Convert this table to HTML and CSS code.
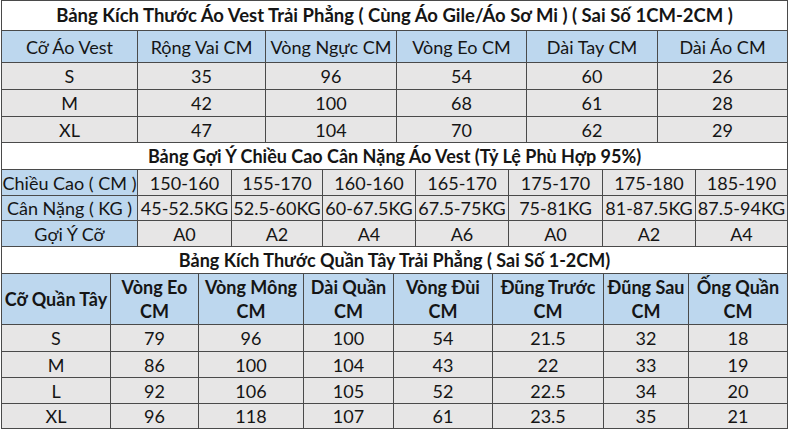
FILE: index.html
```html
<!DOCTYPE html>
<html lang="vi">
<head>
<meta charset="utf-8">
<title>Bảng Kích Thước</title>
<link rel="stylesheet" href="styles.css">
</head>
<body>
<div class="sheet">
  <section class="grid g1">
    <div class="c title t1">Bảng Kích Thước Áo Vest Trải Phẳng ( Cùng Áo Gile/Áo Sơ Mi ) ( Sai Số 1CM-2CM )</div>
    <div class="c hd">Cỡ Áo Vest</div><div class="c hd">Rộng Vai CM</div><div class="c hd">Vòng Ngực CM</div><div class="c hd">Vòng Eo CM</div><div class="c hd">Dài Tay CM</div><div class="c hd">Dài Áo CM</div>
    <div class="c d">S</div><div class="c d">35</div><div class="c d">96</div><div class="c d">54</div><div class="c d">60</div><div class="c d">26</div>
    <div class="c d">M</div><div class="c d">42</div><div class="c d">100</div><div class="c d">68</div><div class="c d">61</div><div class="c d">28</div>
    <div class="c d">XL</div><div class="c d">47</div><div class="c d">104</div><div class="c d">70</div><div class="c d">62</div><div class="c d">29</div>
  </section>
  <section class="grid g2">
    <div class="c title t2">Bảng Gợi Ý Chiều Cao Cân Nặng Áo Vest (Tỷ Lệ Phù Hợp 95%)</div>
    <div class="c hd lab">Chiều Cao ( CM )</div><div class="c d">150-160</div><div class="c d">155-170</div><div class="c d">160-160</div><div class="c d">165-170</div><div class="c d">175-170</div><div class="c d">175-180</div><div class="c d">185-190</div>
    <div class="c hd lab">Cân Nặng ( KG )</div><div class="c d">45-52.5KG</div><div class="c d">52.5-60KG</div><div class="c d">60-67.5KG</div><div class="c d">67.5-75KG</div><div class="c d">75-81KG</div><div class="c d">81-87.5KG</div><div class="c d">87.5-94KG</div>
    <div class="c hd lab">Gợi Ý Cỡ</div><div class="c d">A0</div><div class="c d">A2</div><div class="c d">A4</div><div class="c d">A6</div><div class="c d">A0</div><div class="c d">A2</div><div class="c d">A4</div>
  </section>
  <section class="grid g3">
    <div class="c title t3">Bảng Kích Thước Quần Tây Trải Phẳng ( Sai Số 1-2CM)</div>
    <div class="c hd bold">Cỡ Quần Tây</div><div class="c hd bold">Vòng Eo<br>CM</div><div class="c hd bold">Vòng Mông<br>CM</div><div class="c hd bold">Dài Quần<br>CM</div><div class="c hd bold">Vòng Đùi<br>CM</div><div class="c hd bold">Đũng Trước<br>CM</div><div class="c hd bold">Đũng Sau<br>CM</div><div class="c hd bold">Ống Quần<br>CM</div>
    <div class="c d">S</div><div class="c d">79</div><div class="c d">96</div><div class="c d">100</div><div class="c d">54</div><div class="c d">21.5</div><div class="c d">32</div><div class="c d">18</div>
    <div class="c d">M</div><div class="c d">86</div><div class="c d">100</div><div class="c d">104</div><div class="c d">43</div><div class="c d">22</div><div class="c d">33</div><div class="c d">19</div>
    <div class="c d">L</div><div class="c d">92</div><div class="c d">106</div><div class="c d">105</div><div class="c d">52</div><div class="c d">22.5</div><div class="c d">34</div><div class="c d">20</div>
    <div class="c d">XL</div><div class="c d">96</div><div class="c d">118</div><div class="c d">107</div><div class="c d">61</div><div class="c d">23.5</div><div class="c d">35</div><div class="c d">21</div>
  </section>
</div>
</body>
</html>
```
FILE: styles.css
```css
html, body {
  margin: 0;
  padding: 0;
  background: #ffffff;
}
body {
  font-family: "Lato", "Liberation Sans", sans-serif;
  color: #151515;
}
.sheet {
  width: 787px;
  margin-left: 1px;
  background: #4a4a4a;
  padding: 1px;
  box-sizing: border-box;
  display: flex;
  flex-direction: column;
  gap: 1px;
}
.grid {
  display: grid;
  gap: 1px;
  background: #4a4a4a;
}
.g1 {
  grid-template-columns: 135px 127px 130px 129px 130px 129px;
  grid-template-rows: 29px 31px 26px 26px 25px;
}
.g2 {
  grid-template-columns: 135px 93px 90px 92px 92px 93px 92px 91px;
  grid-template-rows: 26px 25px 24px 25px;
}
.g3 {
  grid-template-columns: 108px 87px 104px 89px 98px 110px 84px 98px;
  grid-template-rows: 26px 50px 26px 25px 25px 24px;
}
.c {
  display: flex;
  align-items: center;
  justify-content: center;
  text-align: center;
  white-space: nowrap;
  font-size: 18px;
  line-height: 1;
}
.title {
  grid-column: 1 / -1;
  background: #ffffff;
  font-weight: 700;
}
.t1 { font-size: 18.5px; }
.t2 { font-size: 18px; }
.t3 { font-size: 18px; }
.hd {
  background: #bdd7ee;
}
.d {
  background: #e7e6e6;
}
.bold {
  font-weight: 700;
  line-height: 24px;
}
```
